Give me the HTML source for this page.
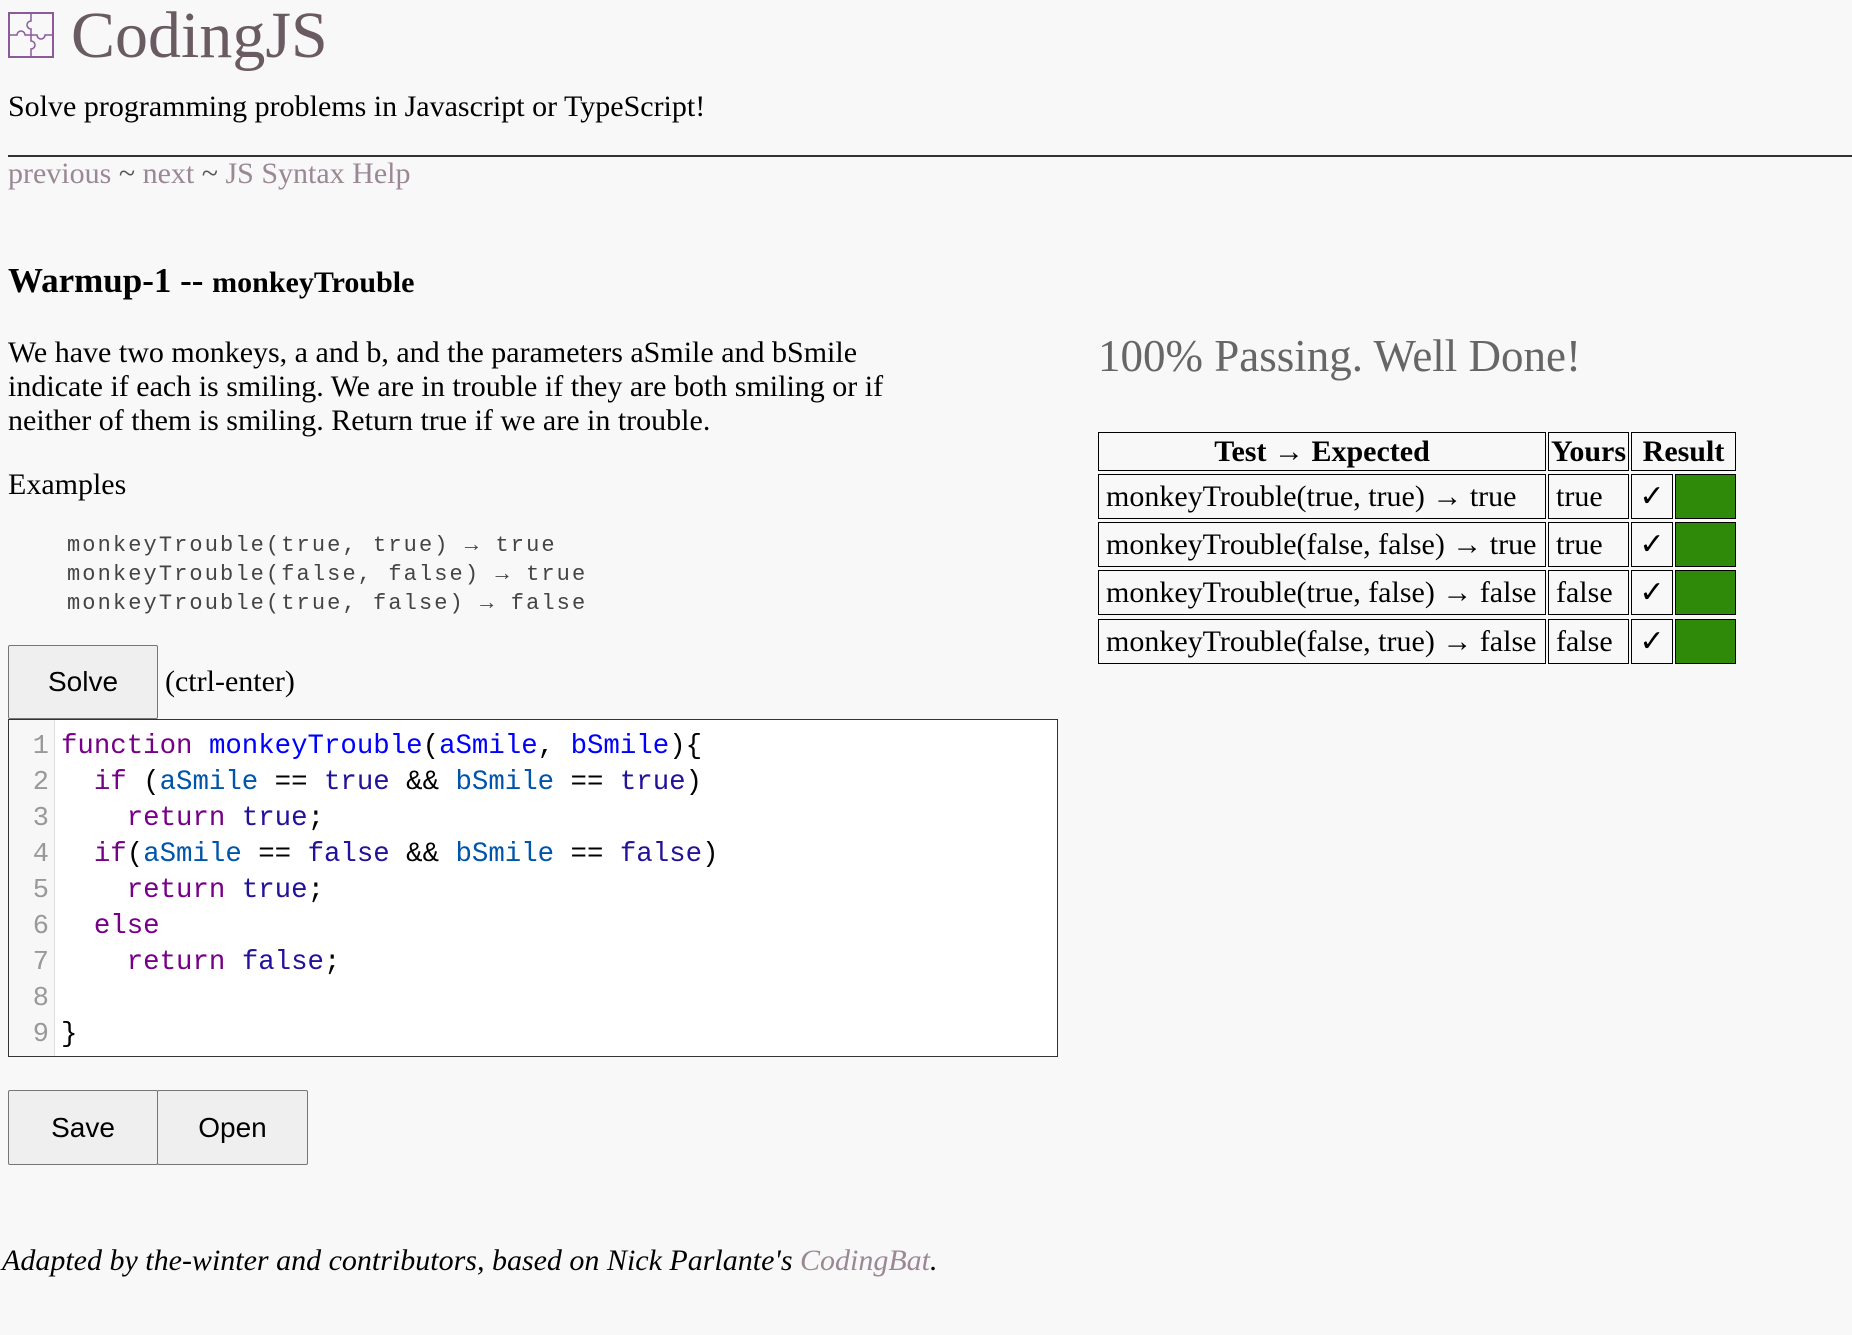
<!DOCTYPE html>
<html><head><meta charset="utf-8"><style>
body{margin:0;width:1852px;height:1335px;background:#f8f8f8;font-family:"Liberation Serif",serif;color:#000;position:relative;overflow:hidden}
.a{position:absolute;white-space:nowrap}
a{color:#9a8894;text-decoration:none}
.btn{position:absolute;background:#efefef;border:1px solid #767676;border-radius:2px;font-family:"Liberation Sans",sans-serif;font-size:28px;display:flex;align-items:center;justify-content:center;box-sizing:border-box}
.code{position:absolute;left:8px;top:719px;width:1050px;height:338px;border:1px solid #333;box-sizing:border-box;background:#fff}
.gut{position:absolute;left:0;top:0;width:45px;height:100%;background:#f7f7f7;border-right:1px solid #ddd}
.ln{position:absolute;left:0;width:40px;text-align:right;color:#999;font-family:"Liberation Mono",monospace;font-size:27px}
.cl{position:absolute;left:52px;font-family:"Liberation Mono",monospace;font-size:27.4px;color:#000}
.k{color:#708}.d{color:#00f}.v{color:#05a}.t{color:#219}
.c{position:absolute;border:1px solid #000;box-sizing:border-box;font-size:30px;padding:0 7px;white-space:nowrap;overflow:hidden;background:#f8f8f8;height:45px;line-height:43px}
.h{height:39px;line-height:37px;font-weight:bold;text-align:center;padding:0 2px}
.ck{text-align:center;font-size:30px;font-weight:bold;font-family:"DejaVu Sans",sans-serif;padding:0}
.g{background:#2e8a08}
</style></head><body>
<svg class="a" style="left:8px;top:12px" width="46" height="46" viewBox="0 0 46 46"><rect x="1" y="1" width="44" height="44" fill="none" stroke="#8a5a9a" stroke-width="2"/><path d="M23 1v8a4 4 0 1 0 0 8v12a4 4 0 1 1 0 8v8M1 23h8a4 4 0 1 1 8 0h12a4 4 0 1 0 8 0h8" fill="none" stroke="#8a5a9a" stroke-width="1.5"/></svg>
<div class="a" style="left:71px;top:-2px;font-size:66px;color:#6a5a62">CodingJS</div>
<div class="a" style="left:8px;top:90px;font-size:30px">Solve programming problems in Javascript or TypeScript!</div>
<div class="a" style="left:8px;top:155px;width:1844px;height:2px;background:#333"></div>
<div class="a" style="left:8px;top:157px;font-size:30px;color:#555"><a>previous</a> ~ <a>next</a> ~ <a>JS Syntax Help</a></div>
<div class="a" style="left:8px;top:261px;font-weight:bold;font-size:35px">Warmup-1 -- <span style="font-size:30px">monkeyTrouble</span></div>
<div class="a" style="left:8px;top:336px;font-size:30px;line-height:34px;white-space:normal;width:890px">We have two monkeys, a and b, and the parameters aSmile and bSmile indicate if each is smiling. We are in trouble if they are both smiling or if neither of them is smiling. Return true if we are in trouble.</div>
<div class="a" style="left:8px;top:468px;font-size:30px">Examples</div>
<div class="a" style="left:67px;top:531px;font-family:'Liberation Mono',monospace;font-size:22px;letter-spacing:2.1px;line-height:29px;color:#444">monkeyTrouble(true, true) → true<br>monkeyTrouble(false, false) → true<br>monkeyTrouble(true, false) → false</div>
<div class="btn" style="left:8px;top:645px;width:150px;height:74px">Solve</div>
<div class="a" style="left:165px;top:665px;font-size:30px">(ctrl-enter)</div>
<div class="code"><div class="gut"></div>
<div class="ln" style="top:9px;line-height:36px">1<br>2<br>3<br>4<br>5<br>6<br>7<br>8<br>9</div>
<div class="cl" style="top:9px;line-height:36px;white-space:pre"><span class="k">function</span> <span class="d">monkeyTrouble</span>(<span class="d">aSmile</span>, <span class="d">bSmile</span>){
  <span class="k">if</span> (<span class="v">aSmile</span> == <span class="t">true</span> &amp;&amp; <span class="v">bSmile</span> == <span class="t">true</span>)
    <span class="k">return</span> <span class="t">true</span>;
  <span class="k">if</span>(<span class="v">aSmile</span> == <span class="t">false</span> &amp;&amp; <span class="v">bSmile</span> == <span class="t">false</span>)
    <span class="k">return</span> <span class="t">true</span>;
  <span class="k">else</span>
    <span class="k">return</span> <span class="t">false</span>;

}</div></div>
<div class="btn" style="left:8px;top:1090px;width:150px;height:75px">Save</div>
<div class="btn" style="left:157px;top:1090px;width:151px;height:75px">Open</div>
<div class="a" style="left:2px;top:1244px;font-size:30px;font-style:italic">Adapted by the-winter and contributors, based on Nick Parlante's <a>CodingBat</a>.</div>
<div class="a" style="left:1098px;top:330px;font-size:45px;color:#666">100% Passing. Well Done!</div>

<div class="c h" style="left:1098px;top:432px;width:448px">Test → Expected</div>
<div class="c h" style="left:1548px;top:432px;width:81px">Yours</div>
<div class="c h" style="left:1631px;top:432px;width:105px">Result</div>

<div class="c" style="left:1098px;top:474px;width:448px">monkeyTrouble(true, true) → true</div>
<div class="c" style="left:1548px;top:474px;width:81px">true</div>
<div class="c ck" style="left:1631px;top:474px;width:42px">✓</div>
<div class="c g" style="left:1675px;top:474px;width:61px"></div>

<div class="c" style="left:1098px;top:522px;width:448px">monkeyTrouble(false, false) → true</div>
<div class="c" style="left:1548px;top:522px;width:81px">true</div>
<div class="c ck" style="left:1631px;top:522px;width:42px">✓</div>
<div class="c g" style="left:1675px;top:522px;width:61px"></div>

<div class="c" style="left:1098px;top:570px;width:448px">monkeyTrouble(true, false) → false</div>
<div class="c" style="left:1548px;top:570px;width:81px">false</div>
<div class="c ck" style="left:1631px;top:570px;width:42px">✓</div>
<div class="c g" style="left:1675px;top:570px;width:61px"></div>

<div class="c" style="left:1098px;top:619px;width:448px">monkeyTrouble(false, true) → false</div>
<div class="c" style="left:1548px;top:619px;width:81px">false</div>
<div class="c ck" style="left:1631px;top:619px;width:42px">✓</div>
<div class="c g" style="left:1675px;top:619px;width:61px"></div>
</body></html>
